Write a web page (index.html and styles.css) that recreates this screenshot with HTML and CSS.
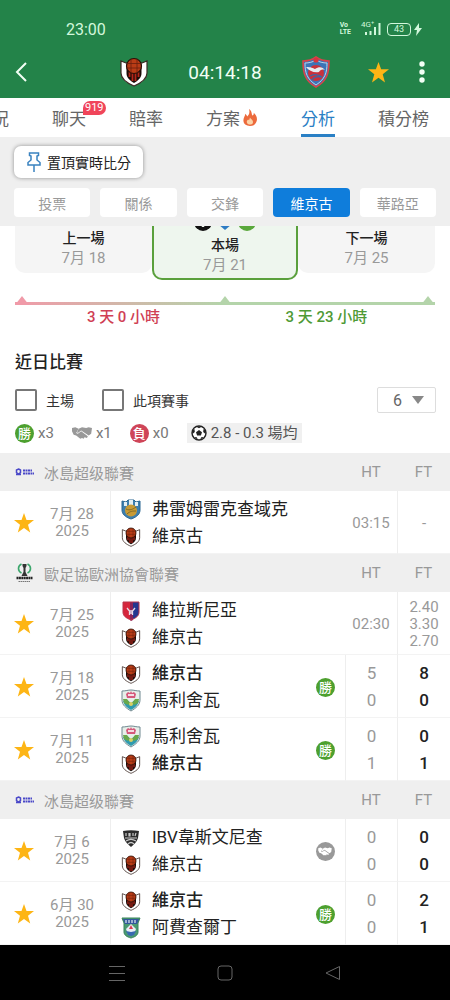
FILE: index.html
```html
<!DOCTYPE html>
<html lang="zh-Hant">
<head>
<meta charset="utf-8">
<meta name="viewport" content="width=device-width, initial-scale=1">
<title>分析</title>
<link rel="stylesheet" href="styles.css">
</head>
<body>

<!-- Shared icons -->
<svg class="sprite" width="0" height="0" aria-hidden="true">
  <symbol id="star" viewBox="0 0 20 20">
    <path fill="#fdb515" d="M10 0l2.500 7H20l-6 4.700 2.200 7.800L10 15l-6.200 4.500L6 11.700 0 7h7.500z"/>
  </symbol>
  <symbol id="vikingur" viewBox="0 0 28 30">
    <path fill="#fff" stroke="#3b2a24" stroke-width="1.200" d="M1 4l5 2h16l5-2v12c0 6-6 10-13 13C7 26 1 22 1 16z"/>
    <path fill="#1b0c08" d="M6.500 7h15v9c0 5-3 7-7.500 10-4.500-3-7.500-5-7.500-10z"/>
    <path stroke="#b3261a" stroke-width="1.800" fill="none" d="M9.500 15v5M12.500 16v8M15.500 16v8M18.500 15v5"/>
    <circle cx="14" cy="9" r="7.500" fill="#b93c16" stroke="#2a0f08" stroke-width="1.200"/>
    <path stroke="#6a200c" stroke-width=".8" fill="none" d="M7 6.500h14M6.500 11h15M11 2v14M17 2v14"/>
  </symbol>
  <symbol id="valur" viewBox="0 0 28 32">
    <path fill="#3c74b8" stroke="#d9434c" stroke-width="1.600" d="M1 5c5 0 9-1 13-4 4 3 8 4 13 4 0 12-2 20-13 26C3 25 1 17 1 5z"/>
    <path fill="none" stroke="#b9d3e8" stroke-width="1" d="M3 7c4 0 8-1 11-3 3 2 7 3 11 3 0 10-2 16-11 22C5 23 3 17 3 7z"/>
    <circle cx="14" cy="17" r="8" fill="#c8323c"/>
    <path fill="none" stroke="#3a68a6" stroke-width="1.300" d="M8 20c4-2 8-2 12 1M10 24c2-3 5-4 9-3"/>
    <path fill="#e4ebef" d="M4 11c5 0 7 1 9 2 4-3 8-2 10 1-3-1-5 0-6 2-5 1-10-1-13-5z"/>
    <circle cx="14" cy="4" r="2.600" fill="#d8343e"/>
  </symbol>
  <symbol id="fram" viewBox="0 0 20 21">
    <path fill="#3d7fae" stroke="#2b6792" d="M1 2l4 1 2-2h6l2 2 4-1v9c0 4-3 7-9 9-6-2-9-5-9-9z"/>
    <path fill="#e4eff4" d="M3 3h3v4H3zM8 1h4v5H8zM14 3h3v4h-3z"/>
    <circle cx="10" cy="11.500" r="6" fill="#c99b35"/>
    <path fill="none" stroke="#7e6926" d="M5 10c4 2 7 0 10-2M6 15c3-3 6-3 9-3"/>
  </symbol>
  <symbol id="vllaznia" viewBox="0 0 20 21">
    <path fill="#d6263c" d="M2 2h8v18C5 18 2 16 2 12z"/>
    <path fill="#24378f" d="M10 2h8v10c0 4-3 6-8 8z"/>
    <path fill="#8a2458" d="M9 2h3v18l-2 1-1-1z"/>
    <path fill="none" stroke="#b8344a" d="M2 2h16v10c0 4-3 6-8 8-5-2-8-4-8-8z"/>
    <path fill="none" stroke="#e8dce9" stroke-width="1.300" d="M6 8l2.500 3h3L14 8M8.500 11v4M11.500 11v4M8 13h4"/>
  </symbol>
  <symbol id="malisheva" viewBox="0 0 20 23">
    <path fill="#e6efe9" stroke="#6f8890" d="M1 2c4 0 6-1 9-1s5 1 9 1v9c0 5-4 8-9 11-5-3-9-6-9-11z"/>
    <path fill="#d5587a" d="M5 5l2-2 2 1 1-2 1 2 2-1 2 2-1 4H6z"/>
    <path fill="#f4dbe2" d="M7 5h6v2H7z"/>
    <path fill="#2f9aae" d="M2 12l4-1 4 3 4-3 4 1c-1 4-4 7-8 9-4-2-7-5-8-9z"/>
    <path fill="#69a84b" d="M2 10h4l3 4-2 2-4-2zM18 10h-4l-3 4 2 2 4-2z"/>
    <circle cx="10" cy="15" r="2" fill="#d8cf62"/>
  </symbol>
  <symbol id="ibv" viewBox="0 0 20 20">
    <path fill="#2c2c2c" d="M2 3c5-1 11-1 16 0l-1 7c-1 4-4 6-7 9-3-3-6-5-7-9z"/>
    <path fill="none" stroke="#c9c9c9" stroke-width="1.200" d="M5 5v3M8 5v3h1V5M12 5v3M15 5l-1 3M4 10h12M5 13c3-2 7-2 10 0M7 16c2-2 4-2 6 0"/>
  </symbol>
  <symbol id="afturelding" viewBox="0 0 20 22">
    <path fill="#4a9a72" stroke="#38835c" d="M1 1h18l-2 5v9c0 3-3 5-7 6-4-1-7-3-7-6V6z"/>
    <path fill="#33579c" d="M2 2h16l-2 5H4z"/>
    <path stroke="#e1ebf4" stroke-width="1.200" fill="none" d="M5 3v3M8 3v3M11 3v3M14 3v3"/>
    <path fill="#e9eef5" d="M10 7l5 5-2 5H7l-2-5z"/>
    <path fill="#d93f52" d="M10 8l2 4h-4z"/>
    <path fill="#3769b0" d="M5 14l5 1 5-1-2 4-3 1-3-1z"/>
  </symbol>
  <symbol id="shake" viewBox="0 0 24 16">
    <path fill="currentColor" d="M0 2l4-1 4 2-3 5 2 1 4-3 8 6-1 2-3-1-1 2-2-1-2 1-5-4-3-1-2-4z"/>
    <path fill="currentColor" d="M24 2l-4-1-3 1-5-1-4 2-2 4 1 1 4-3 9 6 3-2z"/>
  </symbol>
  <symbol id="besta" viewBox="0 0 19 8">
    <path fill="none" stroke="#4a48c8" stroke-width="1.500" d="M3.500 1l2 1v2.500l-2 1.500-2-1.500V2zM1 6.500h5"/>
    <path stroke="#4a48c8" stroke-width="2" stroke-dasharray="2 .5" d="M8 2.500h9M8 5.500h11"/>
  </symbol>
  <symbol id="conference" viewBox="0 0 18 20">
    <path fill="none" stroke="#3aa66b" stroke-width="1.600" d="M6 1C2 3 2 8 6 10M12 1c4 2 4 7 0 9"/>
    <path fill="#333" d="M7 1h4v2l-1 2v4l2 4H6l2-4V5L7 3z"/>
    <path stroke="#222" stroke-width="2.500" stroke-dasharray="2 .4" d="M1 15h16"/>
    <path stroke="#777" stroke-dasharray="1.500 .5" d="M3 18.500h12"/>
  </symbol>
</svg>

<header class="top">
  <div class="status">
    <span>23:00</span>
    <div class="status-icons">
      <span class="volte">Vo<br>LTE</span>
      <span class="signal">
        <span class="signal-type">4G⁺</span>
        <svg width="20" height="14" viewBox="0 0 20 14" aria-hidden="true"><path stroke="currentColor" stroke-width="2" d="M5 13v-3M9.500 13V9M14 13V5M18.500 13V1"/></svg>
      </span>
      <span class="battery">43</span>
      <svg width="8" height="13" viewBox="0 0 8 13" aria-hidden="true"><path fill="currentColor" d="M5 0L0 7h3l-1 6 6-8H5z"/></svg>
    </div>
  </div>
  <div class="match-bar">
    <button class="icon-btn back" aria-label="返回">
      <svg width="12" height="20" viewBox="0 0 12 20"><path fill="none" stroke="currentColor" stroke-width="2" d="M11 1L2 10l9 9"/></svg>
    </button>
    <div class="match-teams">
      <svg width="28" height="30"><use href="#vikingur"/></svg>
      <span class="countdown">04:14:18</span>
      <svg width="28" height="32"><use href="#valur"/></svg>
    </div>
    <div class="match-actions">
      <button class="icon-btn" aria-label="收藏"><svg width="21" height="21"><use href="#star"/></svg></button>
      <button class="icon-btn" aria-label="更多">
        <svg width="6" height="22" viewBox="0 0 6 22"><g fill="currentColor"><circle cx="3" cy="3" r="2.700"/><circle cx="3" cy="11" r="2.700"/><circle cx="3" cy="19" r="2.700"/></g></svg>
      </button>
    </div>
  </div>
</header>

<nav class="tabs">
  <a href="#">況</a>
  <a href="#">聊天<span class="count">919</span></a>
  <a href="#">賠率</a>
  <a href="#">方案<svg class="fire" width="16" height="17" viewBox="0 0 16 18" aria-hidden="true"><path fill="#ec6a3c" d="M7 0c4 3 2 6 4 7 1-1 1-2 1-3 3 3 4 6 3 9-1 3-3 5-7 5s-7-2-7-6c0-3 2-5 2-7 1 1 2 2 2 3 2-2 3-4 2-8z"/><path fill="#fbd3a6" d="M8 9c1 2 4 3 3 6-1 2-5 2-6 0-1-2 0-3 1-4l1 1z"/></svg></a>
  <a href="#" class="active">分析</a>
  <a href="#">積分榜</a>
</nav>

<div class="filters">
  <button class="pin">
    <svg width="14" height="20" viewBox="0 0 14 20" aria-hidden="true"><path fill="none" stroke="#3a82c0" stroke-width="1.500" d="M2.500 1h9v2.500L10 4v4l3 2.500V13H1v-2.500L4 8V4L2.500 3.500zM7 13v7"/></svg>
    置頂實時比分
  </button>
  <div class="chips">
    <button>投票</button>
    <button>關係</button>
    <button>交鋒</button>
    <button class="active">維京古</button>
    <button>華路亞</button>
  </div>
</div>

<main>
  <section class="schedule">
    <div class="game">
      <strong>上一場</strong>
      <span>7月 18</span>
    </div>
    <div class="game current">
      <svg class="game-icons" width="62" height="18" viewBox="0 0 62 18" aria-hidden="true">
        <circle cx="9" cy="9" r="9" fill="#111"/><path fill="#eef6ee" d="M7 12l2-1 2 1-1 2H8z"/>
        <path fill="#2e7bc4" d="M24 0h14v11l-7 6-7-6z"/>
        <circle cx="53" cy="9" r="9" fill="#5aa83c"/>
      </svg>
      <strong>本場</strong>
      <span>7月 21</span>
    </div>
    <div class="game">
      <strong>下一場</strong>
      <span>7月 25</span>
    </div>
  </section>

  <section class="rest">
    <div class="rest-line"><i class="before"></i><i></i><i></i></div>
    <div class="rest-days">
      <span class="before">3 天 0 小時</span>
      <span>3 天 23 小時</span>
    </div>
  </section>

  <section class="recent">
    <h2>近日比賽</h2>
    <form class="options">
      <label><input type="checkbox" name="home">主場</label>
      <label><input type="checkbox" name="league">此項賽事</label>
      <div class="amount">
        <select aria-label="場數"><option>6</option><option>10</option><option>20</option></select>
        <svg width="12" height="8" viewBox="0 0 12 8" aria-hidden="true"><path fill="#888" d="M0 0h12L6 8z"/></svg>
      </div>
    </form>
    <div class="summary">
      <span><b class="result win">勝</b>x3</span>
      <span class="draws"><svg width="20" height="14"><use href="#shake"/></svg>x1</span>
      <span><b class="result loss">負</b>x0</span>
      <span class="goals">
        <svg width="16" height="16" viewBox="0 0 16 16" aria-hidden="true"><circle cx="8" cy="8" r="7" fill="#fff" stroke="#222" stroke-width="1.400"/><path fill="#222" d="M8 5l3 2.200-1.100 3.400H6.100L5 7.200zM5 1.500h6L8 3.200zM1 6l2.500-2 .3 3L1.500 9zM15 6l-2.500-2-.3 3 2.300 2zM3 12l2.800.2L7 15zM13 12l-2.800.2L9 15z"/></svg>
        2.8 - 0.3 場均
      </span>
    </div>
  </section>

  <table class="matches">
    <colgroup>
      <col class="col-star"><col class="col-date"><col><col class="col-result"><col class="col-ht"><col class="col-ft">
    </colgroup>
    <tbody>
      <tr class="league">
        <th colspan="4" scope="colgroup"><div><svg width="19" height="8"><use href="#besta"/></svg>冰島超级聯賽</div></th>
        <th scope="col">HT</th>
        <th scope="col">FT</th>
      </tr>
      <tr>
        <td class="fav"><button class="icon-btn" aria-label="收藏"><svg width="20" height="20"><use href="#star"/></svg></button></td>
        <td class="date">7月 28<br>2025</td>
        <td class="teams" colspan="2">
          <div><svg width="20" height="21"><use href="#fram"/></svg>弗雷姆雷克查域克</div>
          <div><svg width="20" height="20"><use href="#vikingur"/></svg>維京古</div>
        </td>
        <td class="time">03:15</td>
        <td class="odds">-</td>
      </tr>
      <tr class="league">
        <th colspan="4" scope="colgroup"><div><svg width="19" height="20"><use href="#conference"/></svg>歐足協歐洲協會聯賽</div></th>
        <th scope="col">HT</th>
        <th scope="col">FT</th>
      </tr>
      <tr>
        <td class="fav"><button class="icon-btn" aria-label="收藏"><svg width="20" height="20"><use href="#star"/></svg></button></td>
        <td class="date">7月 25<br>2025</td>
        <td class="teams" colspan="2">
          <div><svg width="20" height="21"><use href="#vllaznia"/></svg>維拉斯尼亞</div>
          <div><svg width="20" height="20"><use href="#vikingur"/></svg>維京古</div>
        </td>
        <td class="time">02:30</td>
        <td class="odds">2.40<br>3.30<br>2.70</td>
      </tr>
      <tr>
        <td class="fav"><button class="icon-btn" aria-label="收藏"><svg width="20" height="20"><use href="#star"/></svg></button></td>
        <td class="date">7月 18<br>2025</td>
        <td class="teams">
          <div class="winner"><svg width="20" height="20"><use href="#vikingur"/></svg>維京古</div>
          <div><svg width="20" height="23"><use href="#malisheva"/></svg>馬利舍瓦</div>
        </td>
        <td><b class="result win">勝</b></td>
        <td class="ht">5<br>0</td>
        <td class="ft">8<br>0</td>
      </tr>
      <tr>
        <td class="fav"><button class="icon-btn" aria-label="收藏"><svg width="20" height="20"><use href="#star"/></svg></button></td>
        <td class="date">7月 11<br>2025</td>
        <td class="teams">
          <div><svg width="20" height="23"><use href="#malisheva"/></svg>馬利舍瓦</div>
          <div class="winner"><svg width="20" height="20"><use href="#vikingur"/></svg>維京古</div>
        </td>
        <td><b class="result win">勝</b></td>
        <td class="ht">0<br>1</td>
        <td class="ft">0<br>1</td>
      </tr>
      <tr class="league">
        <th colspan="4" scope="colgroup"><div><svg width="19" height="8"><use href="#besta"/></svg>冰島超级聯賽</div></th>
        <th scope="col">HT</th>
        <th scope="col">FT</th>
      </tr>
      <tr>
        <td class="fav"><button class="icon-btn" aria-label="收藏"><svg width="20" height="20"><use href="#star"/></svg></button></td>
        <td class="date">7月 6<br>2025</td>
        <td class="teams">
          <div><svg width="20" height="20"><use href="#ibv"/></svg>IBV韋斯文尼查</div>
          <div><svg width="20" height="20"><use href="#vikingur"/></svg>維京古</div>
        </td>
        <td><b class="result draw"><svg width="14" height="9"><use href="#shake"/></svg></b></td>
        <td class="ht">0<br>0</td>
        <td class="ft">0<br>0</td>
      </tr>
      <tr>
        <td class="fav"><button class="icon-btn" aria-label="收藏"><svg width="20" height="20"><use href="#star"/></svg></button></td>
        <td class="date">6月 30<br>2025</td>
        <td class="teams">
          <div class="winner"><svg width="20" height="20"><use href="#vikingur"/></svg>維京古</div>
          <div><svg width="20" height="22"><use href="#afturelding"/></svg>阿費查爾丁</div>
        </td>
        <td><b class="result win">勝</b></td>
        <td class="ht">0<br>0</td>
        <td class="ft">2<br>1</td>
      </tr>
    </tbody>
  </table>
</main>

<footer class="system-nav">
  <button class="icon-btn" aria-label="最近"><svg width="16" height="16" viewBox="0 0 16 16"><path stroke="currentColor" d="M0 1.500h16M0 8.500h16M0 15.500h16"/></svg></button>
  <button class="icon-btn" aria-label="主頁"><svg width="16" height="16" viewBox="0 0 16 16"><rect x="1" y="1" width="14" height="14" rx="3" fill="none" stroke="currentColor"/></svg></button>
  <button class="icon-btn" aria-label="返回"><svg width="16" height="16" viewBox="0 0 16 16"><path fill="none" stroke="currentColor" stroke-linejoin="round" d="M14.500 1.500v13L1 8z"/></svg></button>
</footer>

</body>
</html>
```
FILE: styles.css
```css
* {
  box-sizing: border-box;
}

body {
  margin: 0;
  min-height: 100vh;
  display: flex;
  flex-direction: column;
  font-family: Roboto, "Noto Sans CJK TC", sans-serif;
  font-size: 15px;
  color: #222;
  background-color: #fff;
  overflow-x: hidden;
}

button {
  font-family: inherit;
  border: none;
  cursor: pointer;
}

svg {
  display: block;
  flex: none;
}

.sprite {
  position: absolute;
}

.icon-btn {
  display: block;
  padding: 0;
  background: none;
  color: inherit;
}

/* Green header */
.top {
  background-color: #238349;
  color: #f2fff5;
}

.status {
  display: flex;
  justify-content: space-between;
  align-items: center;
  height: 46px;
  padding: 12px 28px 0 66px;
  font-size: 16px;
  color: #d2f8dc;
}

.status-icons {
  display: flex;
  align-items: center;
  gap: 3px;
}

.volte {
  margin-right: 7px;
  font-size: 7px;
  line-height: 7px;
  font-weight: bold;
}

.signal {
  position: relative;
  margin-right: 3px;
}

.signal-type {
  position: absolute;
  left: 0;
  top: -1px;
  font-size: 8px;
  line-height: 8px;
}

.battery {
  width: 24px;
  height: 13px;
  border: 1px solid #d2f8dc;
  border-radius: 4px;
  font-size: 9px;
  line-height: 11px;
  text-align: center;
}

.match-bar {
  display: grid;
  grid-template-columns: 1fr auto 1fr;
  align-items: center;
  height: 52px;
  padding: 0 25px 0 15px;
}

.back {
  justify-self: start;
}

.match-teams {
  display: flex;
  align-items: center;
  gap: 40px;
  margin-left: 10px;
}

.countdown {
  font-size: 19px;
}

.match-actions {
  display: flex;
  align-items: center;
  justify-content: flex-end;
  gap: 30px;
}

/* Page tabs */
.tabs {
  display: flex;
  justify-content: flex-end;
  gap: 43px;
  height: 39px;
  padding-right: 21px;
  overflow: hidden;
}

.tabs a {
  position: relative;
  display: flex;
  flex: none;
  align-items: center;
  padding-top: 6px;
  border-bottom: 3px solid transparent;
  color: #666;
  font-size: 17px;
  line-height: 30px;
  text-decoration: none;
}

.tabs a.active {
  color: #2a80c5;
  border-color: #2a80c5;
}

.fire {
  margin: 0 0 3px 2px;
}

.count {
  position: absolute;
  left: 31px;
  top: 3px;
  padding: 0 2px;
  border-radius: 7px 7px 7px 0;
  background-color: #f0455a;
  color: #fff;
  font-size: 11px;
  line-height: 14px;
}

/* Grey filter block */
.filters {
  padding: 9px 14px;
  background-color: #efefef;
}

.pin {
  display: flex;
  align-items: center;
  gap: 6px;
  height: 32px;
  padding: 0 12px 0 13px;
  border-radius: 7px;
  background-color: #fff;
  box-shadow: 0 0 4px rgba(0, 0, 0, 0.4);
  color: #222;
  font-size: 14px;
}

.chips {
  display: grid;
  grid-template-columns: repeat(5, 1fr);
  gap: 10px;
  margin-top: 10px;
}

.chips button {
  height: 29px;
  padding: 0;
  border-radius: 4px;
  background-color: #fff;
  color: #999;
  font-size: 14px;
}

.chips button.active {
  background-color: #0f7ddb;
  color: #fff;
}

/* Previous, current and next game */
.schedule {
  display: grid;
  grid-template-columns: 1fr 146px 1fr;
  align-items: start;
  padding: 0 15px;
  overflow: hidden;
}

.game {
  display: flex;
  flex-direction: column;
  align-items: center;
  padding: 2px 0 5px;
  border-radius: 0 0 10px 10px;
  background-color: #f5f5f5;
  line-height: 20px;
}

.game strong {
  font-size: 14px;
  font-weight: 500;
}

.game span {
  color: #999;
}

.game.current {
  padding: 0 0 3px;
  border: 2px solid #5aa03c;
  border-top: none;
  background-color: #eef6ee;
}

.game-icons {
  margin: -13px 0 4px;
}

/* Rest time between games */
.rest {
  padding-top: 16px;
}

.rest-line {
  display: flex;
  justify-content: space-between;
  margin: 0 15px;
  background: linear-gradient(to right, #f09aa8, #b4d4aa 50%) bottom / 100% 3px no-repeat;
}

.rest-line i {
  width: 14px;
  height: 9px;
  background-color: #b4d4aa;
  clip-path: polygon(50% 0, 100% 100%, 0 100%);
}

.rest-line .before {
  background-color: #f09aa8;
}

.rest-days {
  display: grid;
  grid-template-columns: 1fr 1fr;
  padding: 2px 22px 0;
  color: #4f9a35;
  font-weight: 500;
  line-height: 20px;
  text-align: center;
}

.rest-days .before {
  color: #d03f55;
}

/* Recent matches */
.recent {
  padding: 23px 14px 10px 15px;
}

.recent h2 {
  margin: 0 0 13px;
  font-size: 17px;
  font-weight: 500;
  line-height: 24px;
}

.options {
  display: flex;
  align-items: center;
  gap: 28px;
  height: 26px;
  font-size: 14px;
  color: #333;
}

.options label {
  display: flex;
  align-items: center;
  gap: 9px;
}

.options input {
  appearance: none;
  width: 22px;
  height: 22px;
  margin: 0;
  border: 2px solid #777;
  border-radius: 2px;
}

.options input:checked {
  background-color: #2a80c5;
}

.amount {
  position: relative;
  margin-left: auto;
}

.amount select {
  appearance: none;
  width: 59px;
  height: 26px;
  padding: 0 0 0 15px;
  border: 1px solid #ddd;
  border-radius: 2px;
  background-color: #fff;
  color: #666;
  font-family: inherit;
  font-size: 16px;
}

.amount svg {
  position: absolute;
  right: 12px;
  top: 9px;
  pointer-events: none;
}

.summary {
  display: flex;
  align-items: center;
  gap: 18px;
  margin-top: 10px;
  color: #777;
  line-height: 20px;
}

.summary span {
  display: flex;
  align-items: center;
  gap: 4px;
}

.draws svg {
  color: #999;
}

.summary .goals {
  padding: 0 4px;
  background-color: #f0f0f0;
  color: #555;
}

.result {
  display: flex;
  align-items: center;
  justify-content: center;
  width: 19px;
  height: 19px;
  border-radius: 50%;
  color: #fff;
  font-size: 13px;
  font-weight: 500;
  line-height: 19px;
}

.win {
  background-color: #4da02f;
}

.loss {
  background-color: #cf4558;
}

.draw {
  background-color: #999;
}

/* Match table */
.matches {
  width: 100%;
  table-layout: fixed;
  border-spacing: 0;
}

.col-star {
  width: 48px;
}

.col-date {
  width: 63px;
}

.col-result {
  width: 29px;
}

.col-ht {
  width: 52px;
}

.col-ft {
  width: 53px;
}

.matches th {
  height: 38px;
  padding: 0;
  background-color: #efefef;
  color: #999;
  font-weight: normal;
}

.league div {
  display: flex;
  align-items: center;
  gap: 10px;
  padding-left: 15px;
}

.matches td {
  height: 63px;
  padding: 2px 0 0;
  border-bottom: 1px solid #f3f3f3;
  color: #999;
  line-height: 17px;
  text-align: center;
}

.fav .icon-btn {
  margin: 0 auto;
}

.matches .date {
  padding-right: 14px;
  border-right: 1px solid #eee;
}

.matches .teams {
  padding-left: 10px;
}

.teams div {
  display: flex;
  align-items: center;
  gap: 11px;
  height: 27px;
  color: #222;
  font-size: 17px;
  white-space: nowrap;
}

.teams .winner {
  font-weight: 500;
}

.matches .ht,
.matches .ft {
  font-size: 17px;
  line-height: 27px;
}

.matches .ht,
.matches .odds,
.matches .ft {
  border-left: 1px solid #eee;
}

.matches .ft {
  color: #222;
  font-weight: 500;
}

/* Android buttons */
.system-nav {
  display: flex;
  flex: 1;
  align-items: center;
  justify-content: center;
  gap: 92px;
  min-height: 55px;
  background-color: #000;
  color: #666;
}
```
